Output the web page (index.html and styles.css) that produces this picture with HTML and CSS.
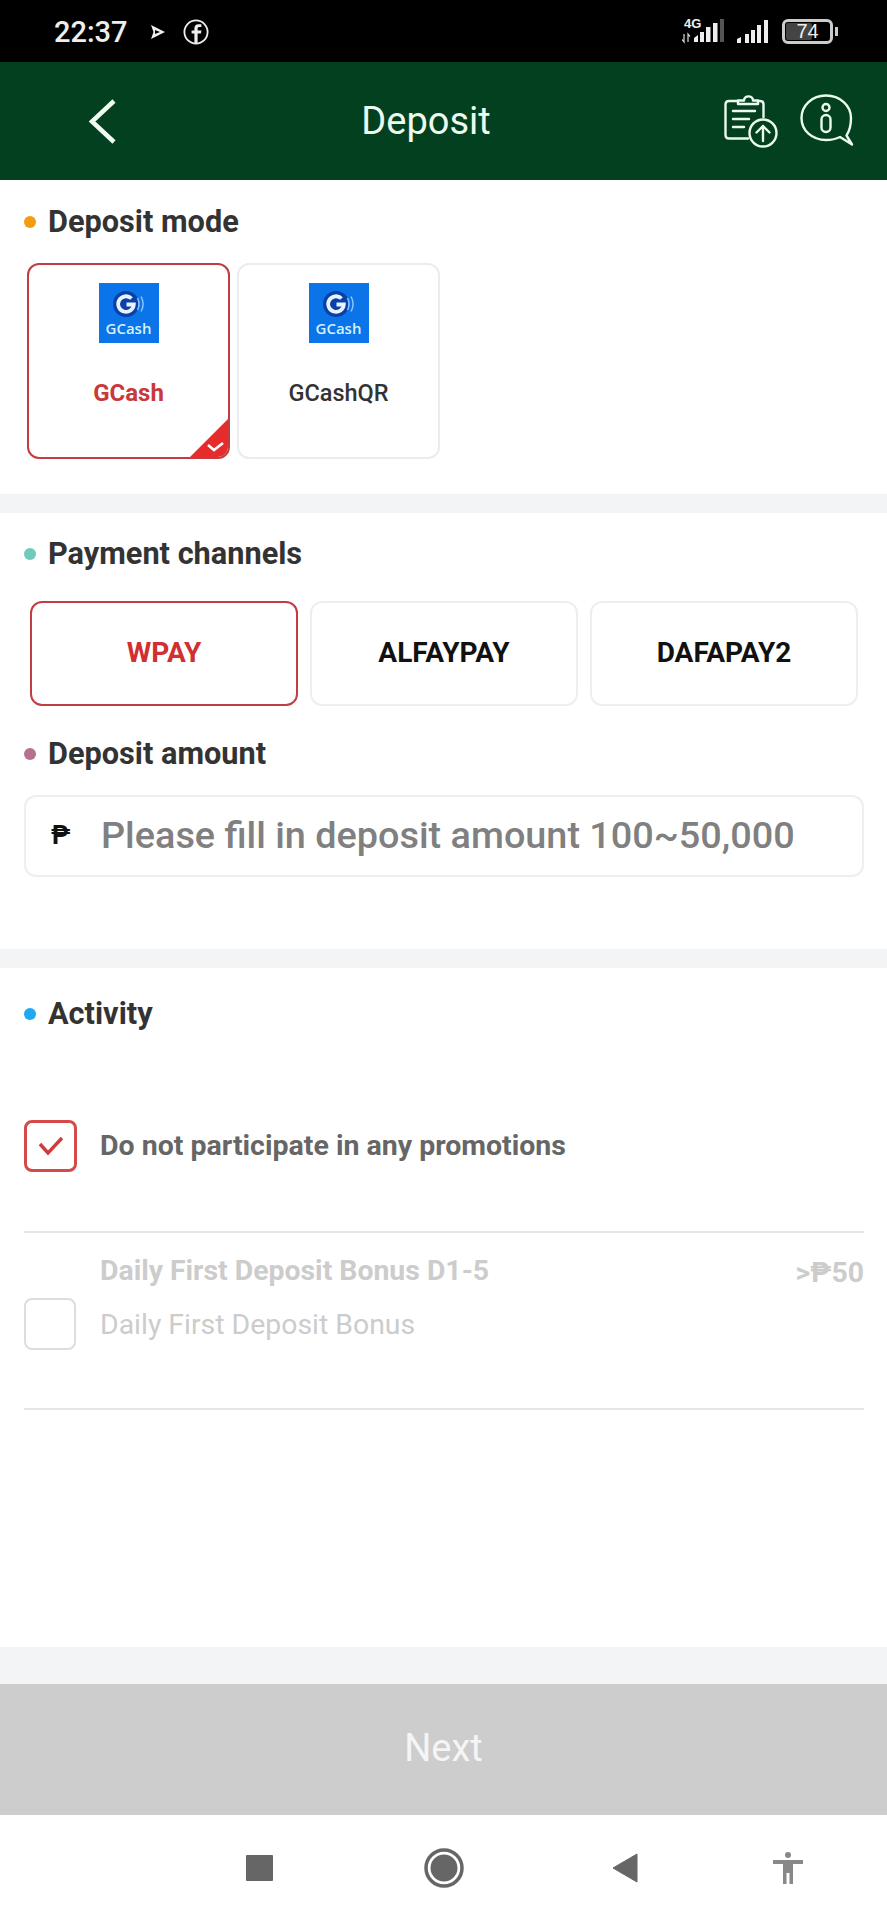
FILE: index.html
```html
<!DOCTYPE html>
<html lang="en">
<head>
    <meta charset="UTF-8">
    <meta name="viewport" content="width=device-width, initial-scale=1.0">
    <title>Deposit</title>
    <link rel="stylesheet" href="styles.css">
</head>
<body>
    <div class="app">
        <!-- Phone status bar -->
        <div class="status-bar">
            <span class="time">22:37</span>
            <svg class="play-icon" width="16" height="16" viewBox="0 0 16 16">
                <path d="M1 1 15 8 1 15 3.500 8Z" fill="#eee"/>
                <path d="M5 6 10 8 5 10Z" fill="#000"/>
            </svg>
            <svg class="fb-icon" width="26" height="26" viewBox="0 0 26 26">
                <circle cx="13" cy="13" r="11.600" fill="none" stroke="#eee" stroke-width="1.800"/>
                <path d="M14.600 24V14.600H18L18.400 11.400H14.600V9.600C14.600 8.500 15.100 8 16.200 8H18.400V5.200H15.600C12.900 5.200 11.400 6.800 11.400 9.300V11.400H8.600V14.600H11.400V24Z" fill="#eee"/>
            </svg>
            <div class="status-right">
                <svg width="46" height="28" viewBox="0 0 46 28">
                    <text x="2" y="11" class="net-label">4G</text>
                    <path d="M2 17V25L0 22.500M6 25V17L8 19.500" fill="none" stroke="#ccc" stroke-width="1.300"/>
                    <path d="M12 25V21L16 18V25Z" fill="#eee"/>
                    <rect x="18" y="15" width="4" height="10" fill="#eee"/>
                    <rect x="24" y="10" width="4.500" height="15" fill="#eee"/>
                    <rect x="31" y="6" width="4.500" height="19" fill="#eee"/>
                    <rect x="38" y="2" width="4" height="23" fill="#555"/>
                </svg>
                <svg class="signal-two" width="35" height="26" viewBox="0 0 35 26">
                    <path d="M1 25V21L5 19V25Z" fill="#eee"/>
                    <rect x="9" y="16" width="4" height="9" fill="#eee"/>
                    <rect x="15" y="12" width="4" height="13" fill="#eee"/>
                    <rect x="21" y="7" width="4" height="18" fill="#eee"/>
                    <rect x="28" y="2" width="4" height="23" fill="#eee"/>
                </svg>
                <div class="battery">
                    <div class="battery-level"></div>
                    <span class="battery-text">74</span>
                </div>
                <div class="battery-nub"></div>
            </div>
        </div>

        <!-- Header -->
        <div class="header">
            <svg class="back-icon" width="29" height="47" viewBox="0 0 29 47">
                <path d="M26 3 4 23.500 26 44" fill="none" stroke="#f0fbf2" stroke-width="4.500"/>
            </svg>
            <h1 class="title">Deposit</h1>
            <svg class="record-icon" width="54" height="54" viewBox="0 0 54 54">
                <g fill="none" stroke="#eafaee" stroke-width="2.400" stroke-linecap="round" stroke-linejoin="round">
                    <path d="M14 7H5C3 7 1.500 8.500 1.500 10.500V41C1.500 43 3 44.500 5 44.500H24"/>
                    <path d="M14 10V6.500H20C20 1 29 1 29 6.500H34V10Z"/>
                    <path d="M34 7H36C38 7 39.500 8.500 39.500 10.500V23"/>
                    <path d="M9 17H31M9 25H25M9 33H20"/>
                    <circle cx="39" cy="39" r="13.500"/>
                    <path d="M39 47V32M32.500 38.500 39 32 45.500 38.500"/>
                </g>
            </svg>
            <svg class="info-icon" width="54" height="54" viewBox="0 0 54 54">
                <g fill="none" stroke="#eafaee" stroke-width="2.400" stroke-linejoin="round">
                    <path d="M26 1.500C12 1.500 1.500 11.500 1.500 24S12 46 26 46C31 46 36 45 40 43L52 50.500 46.500 41.500C49.500 37 51 31 51 24 51 11.500 40 1.500 26 1.500Z"/>
                    <circle cx="26" cy="13.500" r="3.500"/>
                    <rect x="21.500" y="21" width="9" height="17" rx="4.500"/>
                </g>
            </svg>
        </div>

        <!-- Deposit mode -->
        <section class="block block-mode">
            <h2 class="block-title"><span class="dot dot-orange"></span>Deposit mode</h2>
            <div class="mode-list">
                <div class="mode-card active">
                    <div class="gcash-logo">
                        <svg width="32" height="30" viewBox="0 0 32 30">
                            <circle cx="13" cy="15" r="13" fill="#0c3fa8"/>
                            <path d="M18.500 9.500A7.800 7.800 0 1 0 20.800 15.500H13.500" fill="none" stroke="#e6f4ff" stroke-width="3.800"/>
                            <path d="M24.500 9C26.500 13 26.500 17 24.500 21M28 7.500C30.500 12 30.500 18 28 22.500" fill="none" stroke="#8cc4ff" stroke-width="1.500"/>
                        </svg>
                        <span class="gcash-text">GCash</span>
                    </div>
                    <span class="mode-name">GCash</span>
                    <div class="corner-mark">
                        <svg width="38" height="38" viewBox="0 0 38 38">
                            <path d="M0 38 38 0V38Z" fill="#e52b2b"/>
                            <path d="M18 26 24 31 33 24" fill="none" stroke="#fff" stroke-width="2.600"/>
                        </svg>
                    </div>
                </div>
                <div class="mode-card">
                    <div class="gcash-logo">
                        <svg width="32" height="30" viewBox="0 0 32 30">
                            <circle cx="13" cy="15" r="13" fill="#0c3fa8"/>
                            <path d="M18.500 9.500A7.800 7.800 0 1 0 20.800 15.500H13.500" fill="none" stroke="#e6f4ff" stroke-width="3.800"/>
                            <path d="M24.500 9C26.500 13 26.500 17 24.500 21M28 7.500C30.500 12 30.500 18 28 22.500" fill="none" stroke="#8cc4ff" stroke-width="1.500"/>
                        </svg>
                        <span class="gcash-text">GCash</span>
                    </div>
                    <span class="mode-name">GCashQR</span>
                </div>
            </div>
        </section>

        <!-- Payment channels + amount -->
        <section class="block block-channels">
            <h2 class="block-title"><span class="dot dot-teal"></span>Payment channels</h2>
            <div class="channel-list">
                <div class="channel active">WPAY</div>
                <div class="channel">ALFAYPAY</div>
                <div class="channel">DAFAPAY2</div>
            </div>
            <h2 class="block-title amount-title"><span class="dot dot-pink"></span>Deposit amount</h2>
            <div class="amount-input">
                <span class="currency">₱</span>
                <span class="placeholder">Please fill in deposit amount 100~50,000</span>
            </div>
        </section>

        <!-- Activity -->
        <section class="block block-activity">
            <h2 class="block-title"><span class="dot dot-blue"></span>Activity</h2>
            <div class="promo promo-none">
                <div class="checkbox checked">
                    <svg width="28" height="22" viewBox="0 0 28 22">
                        <path d="M3 9 11 18 25 3" fill="none" stroke="#d23b3b" stroke-width="3.400"/>
                    </svg>
                </div>
                <span class="promo-label">Do not participate in any promotions</span>
            </div>
            <div class="promo promo-bonus">
                <div class="checkbox"></div>
                <div class="promo-text">
                    <div class="bonus-name">Daily First Deposit Bonus D1-5</div>
                    <div class="bonus-desc">Daily First Deposit Bonus</div>
                </div>
                <div class="bonus-limit">&gt;₱50</div>
            </div>
        </section>

        <div class="next-wrap">
            <div class="next-btn">Next</div>
        </div>

        <!-- Phone navigation bar -->
        <div class="nav-bar">
            <div class="nav-square"></div>
            <svg class="nav-home" width="40" height="40" viewBox="0 0 40 40">
                <circle cx="20" cy="20" r="18" fill="none" stroke="#666" stroke-width="3.500"/>
                <circle cx="20" cy="20" r="13.500" fill="#666"/>
            </svg>
            <svg class="nav-back" width="26" height="30" viewBox="0 0 26 30">
                <path d="M1 15 25 1V29Z" fill="#666" stroke="#666" stroke-linejoin="round"/>
            </svg>
            <svg class="nav-access" width="30" height="32" viewBox="0 0 30 32">
                <circle cx="15" cy="3" r="3" fill="#888"/>
                <path d="M0 8H30V12H20V32H16.500V21H13.500V32H10V12H0Z" fill="#888"/>
            </svg>
        </div>
    </div>
</body>
</html>
```

FILE: styles.css
```css
* {
    margin: 0;
    padding: 0;
    box-sizing: border-box;
}

body {
    font-family: Roboto, 'Liberation Sans', sans-serif;
    background: #fff;
}

.app {
    width: 887px;
    height: 1920px;
    display: flex;
    flex-direction: column;
    overflow: hidden;
    background: #f3f4f6;
}

/* status bar */
.status-bar {
    height: 62px;
    flex-shrink: 0;
    background: #000;
    color: #eee;
    display: flex;
    align-items: center;
    padding: 0 49px 0 54px;
}

.time {
    font-size: 29px;
    font-weight: 500;
    line-height: 34px;
    margin-top: 1px;
}

.play-icon {
    margin-left: 22px;
    margin-top: 1px;
}

.fb-icon {
    margin-left: 17px;
    margin-top: 1px;
}

.status-right {
    margin-left: auto;
    display: flex;
    align-items: center;
}

.net-label {
    font-family: 'Liberation Sans', sans-serif;
    font-size: 13px;
    font-weight: 700;
    fill: #eee;
}

.signal-two {
    margin-left: 8px;
}

.battery {
    width: 51px;
    height: 25px;
    margin-left: 11px;
    border: 3px solid #ccc;
    border-radius: 6px;
    position: relative;
    display: flex;
    align-items: center;
    justify-content: center;
}

.battery-level {
    position: absolute;
    left: 1px;
    top: 1px;
    bottom: 1px;
    width: 26px;
    background: #444;
    border-radius: 2px;
}

.battery-text {
    position: relative;
    font-family: 'Liberation Sans', sans-serif;
    font-size: 20px;
    color: #eee;
}

.battery-nub {
    width: 3px;
    height: 9px;
    margin-left: 2px;
    background: #ccc;
}

/* header */
.header {
    height: 118px;
    flex-shrink: 0;
    background: #03401f;
    position: relative;
    display: flex;
    align-items: center;
    padding: 0 33px 0 88px;
}

.title {
    position: absolute;
    left: 0;
    width: 852px;
    text-align: center;
    font-size: 38px;
    font-weight: 400;
    color: #ecfbf0;
}

.record-icon {
    margin-left: auto;
}

.info-icon {
    margin-left: 22px;
}

/* sections */
.block {
    background: #fff;
    flex-shrink: 0;
}

.block-title {
    display: flex;
    align-items: center;
    height: 34px;
    font-size: 30.700px;
    font-weight: 700;
    color: #333;
}

.dot {
    width: 12px;
    height: 12px;
    border-radius: 50%;
    margin: 1px 12px 0 0;
}

.dot-orange { background: #f39c12; }
.dot-teal { background: #6fcabc; }
.dot-pink { background: #b8708f; }
.dot-blue { background: #1eaaf1; }

.block-mode {
    height: 314px;
    margin-bottom: 19px;
    padding: 24px 24px 0;
}

.mode-list {
    display: flex;
    gap: 7px;
    margin: 25px 0 0 3px;
}

.mode-card {
    width: 203px;
    height: 196px;
    border: 2px solid #ececf0;
    border-radius: 12px;
    position: relative;
    overflow: hidden;
    display: flex;
    flex-direction: column;
    align-items: center;
    padding-top: 18px;
}

.mode-card.active {
    border-color: #c23c42;
}

.gcash-logo {
    width: 60px;
    height: 60px;
    background: #0a74e8;
    display: flex;
    flex-direction: column;
    align-items: center;
    padding-top: 6px;
}

.gcash-text {
    font-family: 'Open Sans', sans-serif;
    font-size: 15px;
    font-weight: 600;
    line-height: 16px;
    margin-top: 1px;
    color: #d9f0ff;
}

.mode-name {
    margin-top: 36px;
    font-size: 23.500px;
    line-height: 28px;
    font-weight: 500;
    color: #333;
}

.mode-card.active .mode-name {
    font-size: 24px;
    color: #c8393c;
    font-weight: 700;
}

.corner-mark {
    position: absolute;
    right: 0;
    bottom: 0;
    line-height: 0;
}

.block-channels {
    height: 436px;
    margin-bottom: 19px;
    padding: 23px 23px 0 24px;
}

.channel-list {
    display: flex;
    gap: 12px;
    margin: 31px 6px 0 6px;
}

.channel {
    width: 268px;
    height: 105px;
    border: 2px solid #eeeef0;
    border-radius: 12px;
    display: flex;
    align-items: center;
    justify-content: center;
    padding-bottom: 2px;
    font-size: 28px;
    font-weight: 700;
    color: #111;
}

.channel.active {
    border-color: #c23c42;
    color: #d0302f;
}

.amount-title {
    margin-top: 30px;
}

.amount-input {
    height: 82px;
    margin-top: 25px;
    border: 2px solid #eeeef0;
    border-radius: 12px;
    display: flex;
    align-items: center;
    padding: 0 0 2px 25px;
}

.currency {
    font-size: 26px;
    font-weight: 700;
    color: #111;
    width: 50px;
}

.placeholder {
    font-size: 37.800px;
    font-weight: 500;
    color: #808080;
}

.block-activity {
    height: 679px;
    margin-bottom: 37px;
    padding: 28px 23px 0 24px;
}

.promo {
    display: flex;
    align-items: center;
    border-bottom: 2px solid #e6e6e8;
}

.promo-none {
    height: 173px;
    margin-top: 30px;
}

.promo-bonus {
    height: 177px;
}

.checkbox {
    width: 52px;
    height: 52px;
    flex-shrink: 0;
    border: 2px solid #ddd;
    border-radius: 8px;
    display: flex;
    align-items: center;
    justify-content: center;
}

.promo-bonus .checkbox {
    margin-top: 6px;
}

.checkbox.checked {
    width: 53px;
    border: 3px solid #d44a4a;
}

.promo-label {
    margin-left: 23px;
    font-size: 28.500px;
    font-weight: 700;
    color: #666;
}

.promo-text {
    align-self: flex-start;
    margin-left: 24px;
    padding-top: 11px;
}

.bonus-name {
    font-size: 28.400px;
    line-height: 54px;
    font-weight: 700;
    color: #ccc;
}

.bonus-desc {
    font-size: 28.400px;
    line-height: 54px;
    color: #ccc;
}

.bonus-limit {
    align-self: flex-start;
    margin-left: auto;
    padding-top: 13px;
    font-size: 28.400px;
    line-height: 54px;
    font-weight: 700;
    color: #ccc;
}

/* bottom */
.next-wrap {
    flex-shrink: 0;
}

.next-btn {
    height: 131px;
    padding-bottom: 4px;
    background: #cdcdcd;
    color: #f5f5f5;
    font-size: 38px;
    display: flex;
    align-items: center;
    justify-content: center;
}

.nav-bar {
    flex: 1;
    background: #fff;
    display: flex;
    align-items: center;
    padding-left: 246px;
}

.nav-square {
    width: 27px;
    height: 26px;
    background: #666;
    border-radius: 1px;
}

.nav-home {
    margin-left: 151px;
}

.nav-back {
    margin-left: 148px;
}

.nav-access {
    margin-left: 135px;
}
```
